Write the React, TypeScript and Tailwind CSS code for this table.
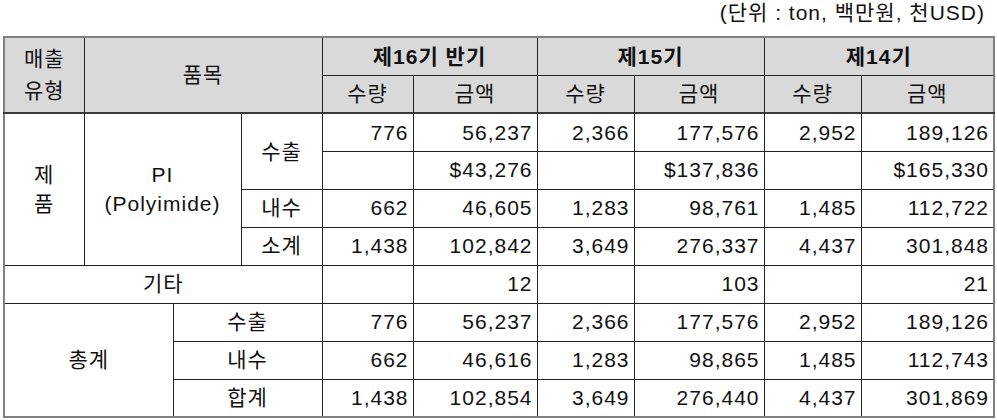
const font = "font-['Liberation_Sans','Noto_Sans_CJK_KR',sans-serif]";

const periods = ["제16기 반기", "제15기", "제14기"];

// [수량, 금액] x 3 periods
const piRows: { label: string; cells: string[] }[] = [
  { label: "수출", cells: ["776", "56,237", "2,366", "177,576", "2,952", "189,126"] },
  { label: "", cells: ["", "$43,276", "", "$137,836", "", "$165,330"] },
  { label: "내수", cells: ["662", "46,605", "1,283", "98,761", "1,485", "112,722"] },
  { label: "소계", cells: ["1,438", "102,842", "3,649", "276,337", "4,437", "301,848"] },
];

const etc = ["", "12", "", "103", "", "21"];

const totalRows: { label: string; cells: string[] }[] = [
  { label: "수출", cells: ["776", "56,237", "2,366", "177,576", "2,952", "189,126"] },
  { label: "내수", cells: ["662", "46,616", "1,283", "98,865", "1,485", "112,743"] },
  { label: "합계", cells: ["1,438", "102,854", "3,649", "276,440", "4,437", "301,869"] },
];

const cell = "border border-[#222] p-0";
const head = "border border-[#222] border-b-2 border-b-[#3a3a3a] bg-[#d9d9d9] p-0 text-center font-normal";
const num = "border border-[#222] p-0 pr-[4px] text-right";

function NumCells({ cells }: { cells: string[] }) {
  return (
    <>
      {cells.map((v, i) => (
        <td key={i} className={num}>{v}</td>
      ))}
    </>
  );
}

export default function App() {
  return (
    <div className={`w-[997px] h-[420px] bg-white text-[#111] ${font} text-[21px] tracking-[1px]`}>
      <div className="h-[36px] flex justify-end items-start pr-[12px] text-[21px] leading-[26px] tracking-[1px]">
        (단위 : ton, 백만원, 천USD)
      </div>

      <table className="ml-[3px] w-[990px] table-fixed border-collapse border-2 border-[#808080]">
        <colgroup>
          <col className="w-[80px]" />
          <col className="w-[89px]" />
          <col className="w-[68px]" />
          <col className="w-[81px]" />
          <col className="w-[91px]" />
          <col className="w-[124px]" />
          <col className="w-[97px]" />
          <col className="w-[130px]" />
          <col className="w-[97px]" />
          <col className="w-[133px]" />
        </colgroup>
        <thead>
          <tr className="h-[38px]">
            <th rowSpan={2} className={`${head} leading-[32px]`}>
              매출
              <br />
              유형
            </th>
            <th rowSpan={2} colSpan={3} className={head}>품목</th>
            {periods.map((p) => (
              <th key={p} colSpan={2} className={`${cell} bg-[#d9d9d9] text-center font-bold`}>
                {p}
              </th>
            ))}
          </tr>
          <tr className="h-[38px]">
            {periods.map((p) => (
              <>
                <th key={p + "q"} className={head}>수량</th>
                <th key={p + "a"} className={head}>금액</th>
              </>
            ))}
          </tr>
        </thead>
        <tbody>
          {piRows.map((r, i) => (
            <tr key={i} className="h-[38px]">
              {i === 0 && (
                <>
                  <td rowSpan={4} className={`${cell} text-center leading-[29px]`}>
                    제
                    <br />
                    품
                  </td>
                  <td rowSpan={4} colSpan={2} className={`${cell} text-center leading-[29px]`}>
                    PI
                    <br />
                    (Polyimide)
                  </td>
                  <td rowSpan={2} className={`${cell} text-center`}>수출</td>
                </>
              )}
              {i > 1 && <td className={`${cell} text-center`}>{r.label}</td>}
              <NumCells cells={r.cells} />
            </tr>
          ))}
          <tr className="h-[38px]">
            <td colSpan={4} className={`${cell} text-center`}>기타</td>
            <NumCells cells={etc} />
          </tr>
          {totalRows.map((r, i) => (
            <tr key={i} className="h-[38px]">
              {i === 0 && (
                <td rowSpan={3} colSpan={2} className={`${cell} text-center`}>
                  총계
                </td>
              )}
              <td colSpan={2} className={`${cell} text-center`}>{r.label}</td>
              <NumCells cells={r.cells} />
            </tr>
          ))}
        </tbody>
      </table>
    </div>
  );
}
